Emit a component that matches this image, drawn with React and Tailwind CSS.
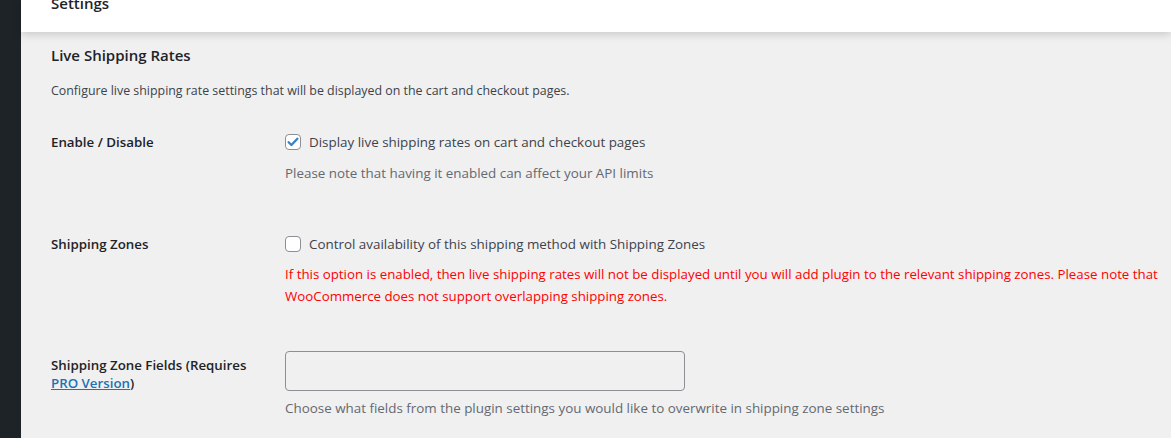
import React from "react";

function Check({ checked }) {
  return (
    <span className="flex h-4 w-4 shrink-0 items-center justify-center rounded-[4px] border border-[#8c8f94] bg-white">
      {checked && (
        <svg viewBox="0 0 16 16" className="h-[14px] w-[14px]">
          <path d="M3 8.3l3.2 3.2L13 4.2" fill="none" stroke="#3582c4" strokeWidth="2.6" strokeLinecap="round" strokeLinejoin="round" />
        </svg>
      )}
    </span>
  );
}

function Row({ label, children, className = "" }) {
  return (
    <div className={`flex ${className}`}>
      <div className="w-[234px] shrink-0 pr-[30px] text-[13.3px] font-semibold leading-[18px] text-[#1d2327]">
        {label}
      </div>
      <div className="min-w-0 flex-1">{children}</div>
    </div>
  );
}

export default function App() {
  return (
    <div className="flex h-[438px] overflow-hidden bg-[#f0f0f1] font-['Segoe_UI','Open_Sans',sans-serif]">
      <div className="w-[21px] shrink-0 bg-[#1d2327]" />
      <div className="min-w-0 flex-1">
        <div className="relative z-10 h-8 bg-white shadow-[0_2px_10px_rgba(0,0,0,0.18)]">
          <h1 className="pl-[30px] pt-0 text-[15px] font-semibold leading-[6px] text-[#1d2327]">Settings</h1>
        </div>
        <div className="pl-[30px] pr-[3px] pt-[13px]">
          <h2 className="text-[15px] font-semibold leading-[20px] text-[#1d2327]">Live Shipping Rates</h2>
          <p className="mt-[17px] text-[12.4px] leading-[18px] text-[#3c434a]">
            Configure live shipping rate settings that will be displayed on the cart and checkout pages.
          </p>

          <Row label="Enable / Disable" className="mt-[33px]">
            <label className="flex items-center gap-2 text-[13.4px] leading-[18px] text-[#3c434a]">
              <Check checked />
              Display live shipping rates on cart and checkout pages
            </label>
            <p className="mt-[13px] text-[13.4px] leading-[18px] text-[#646970]">
              Please note that having it enabled can affect your API limits
            </p>
          </Row>

          <Row label="Shipping Zones" className="mt-[53px]">
            <label className="flex items-center gap-2 text-[13.4px] leading-[18px] text-[#3c434a]">
              <Check />
              Control availability of this shipping method with Shipping Zones
            </label>
            <p className="mt-[10px] text-[13.3px] leading-[22px] text-[#ff0000]">
              If this option is enabled, then live shipping rates will not be displayed until you will add plugin to the relevant shipping zones. Please note that WooCommerce does not support overlapping shipping zones.
            </p>
          </Row>

          <Row
            className="mt-[44px]"
            label={
              <div className="pt-[5px]">
                Shipping Zone Fields (Requires{" "}
                <a href="#" className="text-[#2271b1] underline">PRO Version</a>)
              </div>
            }
          >
            <div className="h-10 w-[400px] rounded-[4px] border border-[#8c8f94] bg-[#f0f0f1]" />
            <p className="mt-[8px] text-[13.4px] leading-[18px] text-[#646970]">
              Choose what fields from the plugin settings you would like to overwrite in shipping zone settings
            </p>
          </Row>
        </div>
      </div>
    </div>
  );
}
